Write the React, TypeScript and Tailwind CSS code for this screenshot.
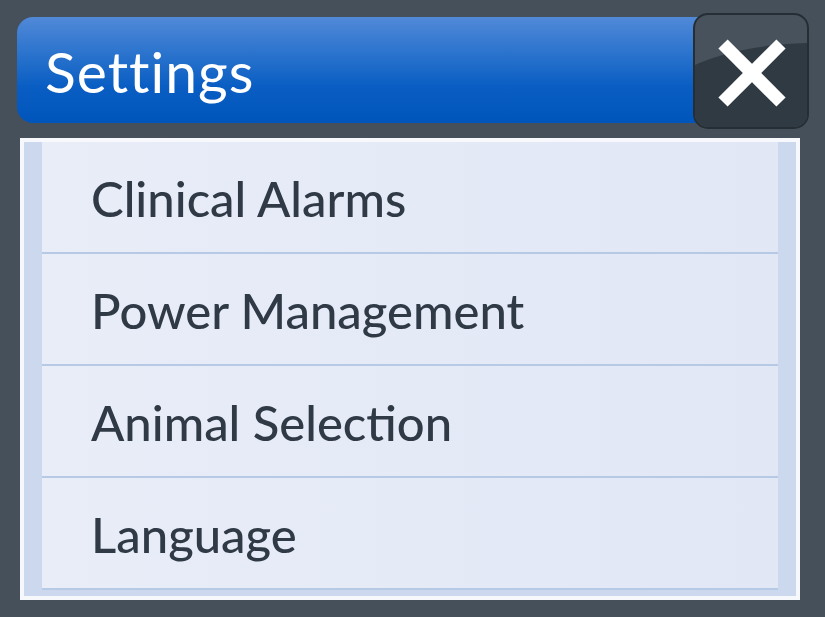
import React from "react";

const items = ["Clinical Alarms", "Power Management", "Animal Selection", "Language"];

export default function App() {
  return (
    <div className="w-[825px] h-[617px] bg-[#46505a] overflow-hidden relative" style={{ fontFamily: "Lato, 'Open Sans', sans-serif" }}>
      <div className="flex items-start pl-[17px] pt-[13px]">
        <div className="mt-[4px] h-[106px] w-[690px] -mr-[14px] rounded-l-[16px] bg-[linear-gradient(180deg,#5189d8_0%,#2a73cd_35%,#0a5ec3_65%,#0055bb_100%)] flex items-center pl-[28px]">
          <span className="text-white text-[57px] leading-none tracking-[1px] mt-[2px]">Settings</span>
        </div>
        <div className="relative z-10 w-[116px] h-[116px] rounded-[15px] bg-[#47525c] border-2 border-[#262e35] overflow-hidden">
          <div className="absolute -left-[40px] top-[28px] w-[320px] h-[130px] rounded-[50%] bg-[#2f3a43]" />
          <svg className="absolute left-0 top-0" width="112" height="112" viewBox="0 0 112 112">
            <line x1="28" y1="29" x2="86" y2="87" stroke="#fff" strokeWidth="13" />
            <line x1="86" y1="29" x2="28" y2="87" stroke="#fff" strokeWidth="13" />
          </svg>
        </div>
      </div>
      <div className="mx-[20px] mt-[9px] w-[780px] h-[462px] border-4 border-[#f7f8fb] bg-[#ccd8ee] flex flex-col px-[18px]">
        {items.map((t) => (
          <div key={t} className="h-[112px] border-b-2 border-[#b6cae5] bg-[linear-gradient(90deg,#e8edf8_0%,#e1e7f5_100%)] flex items-center pl-[49px]">
            <span className="text-[#2f3a46] text-[49px] leading-none font-medium mt-[2px]">{t}</span>
          </div>
        ))}
      </div>
    </div>
  );
}
